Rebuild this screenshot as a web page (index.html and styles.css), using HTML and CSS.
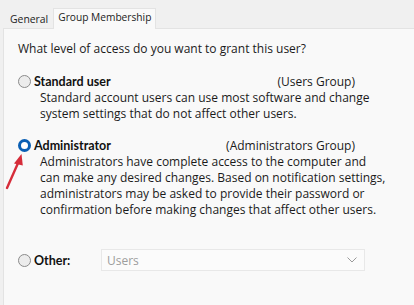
FILE: index.html
```html
<!DOCTYPE html>
<html lang="en">
<head>
    <meta charset="UTF-8">
    <title>User Properties - Group Membership</title>
    <link rel="stylesheet" href="styles.css">
</head>
<body>
    <div class="tabs">
        <div class="tab">General</div>
        <div class="tab active">Group Membership</div>
    </div>

    <div class="panel">
        <p class="question">What level of access do you want to grant this user?</p>

        <div class="option">
            <div class="option-head">
                <span class="radio"></span>
                <span class="option-name">Standard user</span>
                <span class="option-group">(Users Group)</span>
            </div>
            <p class="option-desc">Standard account users can use most software and change<br>system settings that do not affect other users.</p>
        </div>

        <div class="option admin">
            <div class="option-head">
                <span class="radio checked"></span>
                <span class="option-name">Administrator</span>
                <span class="option-group">(Administrators Group)</span>
            </div>
            <p class="option-desc">Administrators have complete access to the computer and<br>can make any desired changes. Based on notification settings,<br>administrators may be asked to provide their password or<br>confirmation before making changes that affect other users.</p>

            <svg class="pointer" width="24" height="42" viewBox="0 0 24 42">
                <path d="M3 38 L14.5 12" stroke="#d62d3a" stroke-width="2.4" stroke-linecap="round" fill="none"/>
                <path d="M10 13.5 L17.5 4 L18.8 15.5 Z" fill="#d62d3a"/>
            </svg>
        </div>

        <div class="other">
            <span class="radio"></span>
            <span class="option-name other-label">Other:</span>
            <div class="combo">
                <span>Users</span>
                <svg width="10" height="6" viewBox="0 0 10 6">
                    <path d="M0.5 0.5 L5 5 L9.5 0.5" stroke="#9a9a9a" stroke-width="1" fill="none"/>
                </svg>
            </div>
        </div>
    </div>
</body>
</html>
```

FILE: styles.css
```css
* {
    margin: 0;
    padding: 0;
    box-sizing: border-box;
}

body {
    font-family: 'Open Sans', 'Noto Sans', sans-serif;
    font-size: 12px;
    color: #1b1b1b;
    background: #f0f0f0;
    overflow: hidden;
}

.tabs {
    display: flex;
    align-items: flex-end;
    height: 28px;
    padding-left: 5px;
}

.tab {
    height: 16px;
    padding: 0 5px 0 5px;
    font-size: 10.4px;
    line-height: 15px;
    color: #222;
}

.tab.active {
    height: 21px;
    padding: 0 4px 0 4px;
    font-size: 10.2px;
    line-height: 17px;
    background: #f9f9f9;
    border: 1px solid #e3e3e3;
    border-bottom: none;
    margin-bottom: -1px;
    position: relative;
    z-index: 1;
}

.panel {
    margin-left: 3px;
    min-height: 300px;
    background: #f9f9f9;
    border-top: 1px solid #e3e3e3;
    border-left: 1px solid #e3e3e3;
    padding: 12px 0 0 14px;
}

.question {
    line-height: 16px;
}

.option {
    margin-top: 15px;
    position: relative;
}

.option.admin {
    margin-top: 14px;
}

.option-head {
    display: flex;
    align-items: center;
    height: 18px;
    width: 337px;
}

.radio {
    width: 13px;
    height: 13px;
    border-radius: 50%;
    border: 1px solid #8b8b8b;
    background: #ececec;
    margin-right: 3px;
    flex-shrink: 0;
}

.radio.checked {
    border: 3.5px solid #0a5fb4;
    background: #ffffff;
}

.option-name {
    font-family: 'Lato', 'Open Sans', sans-serif;
    font-size: 12.5px;
    font-weight: 700;
    color: #111;
}

.option-group {
    margin-left: auto;
}

.option-desc {
    margin: 0 0 0 22px;
    white-space: nowrap;
    line-height: 16px;
}

.pointer {
    position: absolute;
    left: -14px;
    top: 14px;
}

.other {
    display: flex;
    align-items: center;
    margin-top: 31px;
}

.other-label {
    width: 67px;
}

.combo {
    width: 264px;
    height: 22px;
    display: flex;
    align-items: center;
    justify-content: space-between;
    padding: 0 7px 0 5px;
    background: #fbfbfb;
    border: 1px solid #e8e8e8;
    color: #9d9d9d;
}
```
